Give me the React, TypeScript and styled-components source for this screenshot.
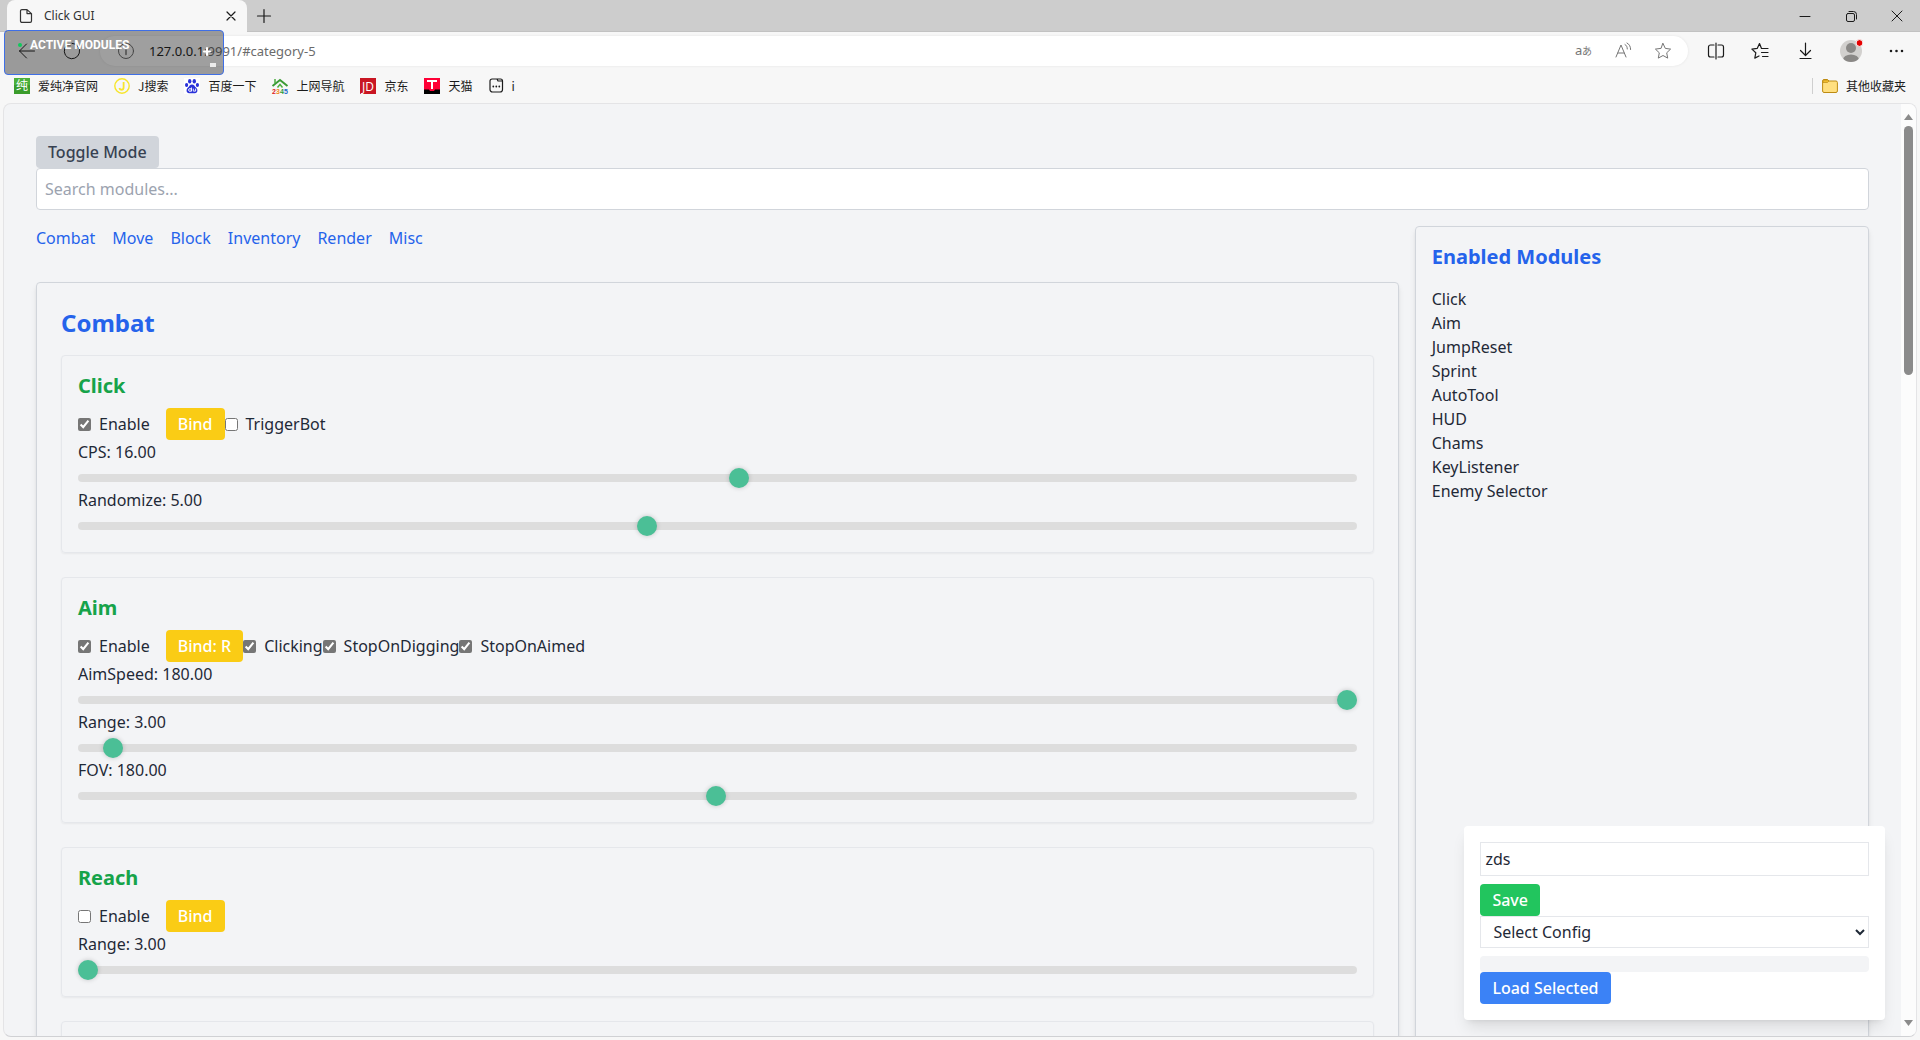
import React, { useState } from "react";
import styled, { createGlobalStyle } from "styled-components";

const uiFont = '"Noto Sans", "Noto Sans CJK SC", sans-serif';

const GlobalStyle = createGlobalStyle`
  *, *::before, *::after { box-sizing: border-box; }
  body { margin: 0; background: #f7f7f7; color: #1f2937; font: 16px/24px ${uiFont}; }
  h1, h2, h3, p, ul { margin: 0; padding: 0; }
  ul { list-style: none; }
  button, input, select { margin: 0; font: inherit; color: inherit; }
  a { color: inherit; text-decoration: none; }
  svg { display: block; flex: none; overflow: visible; }
`;

/* ---------- browser window ---------- */

const Window = styled.div`
  position: relative;
  display: flex;
  flex-direction: column;
  height: 100vh;
  overflow: hidden;
`;

const TabStrip = styled.div`
  display: flex;
  flex: none;
  height: 32px;
  padding-left: 7px;
  background: #cdcdcd;
  box-shadow: inset 0 -1px #c2c2c2;
`;

const Tab = styled.div`
  display: flex;
  align-items: center;
  gap: 11px;
  width: 240px;
  padding: 0 8px 0 12px;
  border-radius: 8px 8px 0 0;
  background: #f7f7f7;
  color: #333;
  font-size: 12px;
  line-height: 16px;
`;

const TabTitle = styled.span`
  flex: 1;
`;

const PlainButton = styled.button<{ $w: number }>`
  display: flex;
  flex: none;
  align-items: center;
  justify-content: center;
  width: ${(p) => p.$w}px;
  height: 100%;
  padding: 0;
  border: 0;
  background: none;
  color: #1b1b1b;
`;

const WindowControls = styled.div`
  display: flex;
  margin-left: auto;
`;

const Toolbar = styled.div`
  display: flex;
  flex: none;
  align-items: center;
  height: 38px;
  padding: 0 2px 0 4px;
`;

const AddressBar = styled.div`
  display: flex;
  flex: 1;
  align-items: center;
  height: 30px;
  margin: 0 5px 0 6px;
  padding: 0 5px 0 16px;
  border-radius: 15px;
  background: #fff;
  box-shadow: 0 0 3px rgba(0, 0, 0, 0.08);
  color: #6b6b6b;
  button { color: #767676; }
`;

const Url = styled.span`
  flex: 1;
  padding-left: 13px;
  font-size: 13px;
  line-height: 20px;
  b { color: #1b1b1b; font-weight: 400; }
`;

const Bookmarks = styled.nav`
  display: flex;
  flex: none;
  align-items: center;
  gap: 16px;
  height: 33px;
  padding: 0 14px 2px;
  color: #1b1b1b;
  font: 12px/16px "Noto Sans CJK SC", sans-serif;
`;

const Bookmark = styled.a<{ $last?: boolean }>`
  display: flex;
  align-items: center;
  gap: 8px;
  ${(p) => p.$last && "margin-left: auto; padding-left: 9px; border-left: 1px solid #cfcfcf;"}
`;

/* ---------- module list overlay ---------- */

const Overlay = styled.aside`
  position: absolute;
  top: 30px;
  left: 4px;
  display: flex;
  gap: 8px;
  width: 220px;
  height: 45px;
  padding: 6px 6px 7px 13px;
  border: 1px solid #3f6fe6;
  border-radius: 4px;
  background: rgba(15, 15, 15, 0.4);
  color: #fff;
  font: 700 12px/16px Roboto, "Liberation Sans", sans-serif;
`;

const StatusDot = styled.span`
  width: 4px;
  height: 4px;
  margin-top: 6px;
  border-radius: 50%;
  background: #0fc95b;
`;

const OverlayTitle = styled.span`
  flex: 1;
`;

const OverlayMarks = styled.span`
  display: flex;
  flex-direction: column;
  align-items: flex-end;
  justify-content: space-between;
  padding: 9px 1px 0 0;
`;

const MiniBar = styled.span`
  width: 6px;
  height: 4px;
  background: #ececec;
`;

/* ---------- page ---------- */

const Frame = styled.div`
  position: relative;
  display: flex;
  flex: 1;
  min-height: 0;
  margin: 0 3px 3px;
  overflow: hidden;
  border: 1px solid #e4e4e6;
  border-bottom-color: #d0d1d4;
  border-radius: 8px;
  background: #f3f4f6;
`;

const Page = styled.main`
  display: flex;
  flex: 1;
  flex-direction: column;
  align-items: stretch;
  min-width: 0;
  padding: 32px 32px 0;
  overflow: hidden;
`;

const Scrollbar = styled.div`
  display: flex;
  flex: none;
  flex-direction: column;
  align-items: center;
  width: 15px;
  padding: 10px 0;
  background: #fcfcfc;
  color: #8b8b8b;
`;

const ScrollTrack = styled.div`
  flex: 1;
  width: 9px;
  padding: 6px 0;
`;

const ScrollThumb = styled.div`
  height: 28%;
  border-radius: 5px;
  background: #8b8b8b;
`;

const tones = {
  gray: ["#d1d5db", "#374151"],
  yellow: ["#facc15", "#fff"],
  green: ["#22c55e", "#fff"],
  blue: ["#3b82f6", "#fff"],
};

const Button = styled.button<{ $tone: keyof typeof tones }>`
  align-self: flex-start;
  padding: 4px 12px;
  border: 0;
  border-radius: 4px;
  background: ${(p) => tones[p.$tone][0]};
  color: ${(p) => tones[p.$tone][1]};
  font-weight: 500;
`;

const Search = styled.input`
  width: 100%;
  padding: 8px;
  border: 1px solid #d1d5db;
  border-radius: 4px;
  background: #fff;
  &::placeholder { color: #9ca3af; opacity: 1; }
`;

const Columns = styled.div`
  display: grid;
  flex: 1;
  grid-template-columns: minmax(0, 3fr) minmax(0, 1fr);
  gap: 16px;
  margin-top: 16px;
`;

const CategoryNav = styled.nav`
  display: flex;
  gap: 17px;
  margin-bottom: 32px;
  color: #2563eb;
`;

const Panel = styled.section<{ $pad: number }>`
  padding: ${(p) => p.$pad}px;
  border: 1px solid #d1d5db;
  border-radius: 4px;
  box-shadow: 0 4px 6px -1px rgba(0, 0, 0, 0.1), 0 2px 4px -2px rgba(0, 0, 0, 0.1);
`;

const CategoryTitle = styled.h1`
  margin-bottom: 16px;
  color: #2563eb;
  font-size: 24px;
  font-weight: 700;
  line-height: 32px;
`;

const SideTitle = styled.h2`
  margin-bottom: 16px;
  color: #2563eb;
  font-size: 20px;
  font-weight: 700;
  line-height: 28px;
`;

const Card = styled.article`
  min-height: 120px;
  margin-bottom: 24px;
  padding: 16px;
  border: 1px solid #e5e7eb;
  border-radius: 4px;
  box-shadow: 0 1px 2px rgba(0, 0, 0, 0.05);
`;

const CardTitle = styled.h2`
  margin-bottom: 8px;
  color: #16a34a;
  font-size: 20px;
  font-weight: 700;
  line-height: 28px;
`;

const Row = styled.div`
  display: flex;
  align-items: center;
`;

const Check = styled.label<{ $gap?: boolean }>`
  display: flex;
  align-items: center;
  gap: 8px;
  margin-right: ${(p) => (p.$gap ? 16 : 0)}px;
  input { width: 13px; height: 13px; accent-color: #767676; }
`;

const SliderField = styled.label`
  display: block;
`;

const Range = styled.input`
  display: block;
  width: 100%;
  height: 8px;
  margin: 10px 0 6px;
  border-radius: 5px;
  background: #ddd;
  appearance: none;
  &::-webkit-slider-thumb {
    width: 20px;
    height: 20px;
    border-radius: 50%;
    background: #4bbf96;
    box-shadow: 0 0 5px rgba(0, 0, 0, 0.2);
    appearance: none;
  }
`;

const ConfigBox = styled.form`
  position: absolute;
  right: 31px;
  bottom: 16px;
  display: flex;
  flex-direction: column;
  width: 22%;
  padding: 16px;
  border-radius: 4px;
  background: #fff;
  box-shadow: 0 10px 15px -3px rgba(0, 0, 0, 0.1), 0 4px 6px -4px rgba(0, 0, 0, 0.1);
`;

const ConfigName = styled.input`
  margin-bottom: 8px;
  padding: 4px;
  border: 1px solid #e5e7eb;
  background: #fff;
`;

const ConfigSelect = styled.select`
  height: 32px;
  margin-bottom: 8px;
  padding: 0 4px 0 8px;
  border: 1px solid #e5e7eb;
  border-radius: 0;
  background: #fff;
`;

const ConfigInfo = styled.div`
  height: 16px;
  border-radius: 4px;
  background: #f3f4f6;
`;

/* ---------- icons ---------- */

const Icon = ({ d, s = 20, w = 1, children }: { d?: string; s?: number; w?: number; children?: React.ReactNode }) => (
  <svg width={s} height={s} viewBox={`0 0 ${s} ${s}`} fill="none" stroke="currentColor" strokeWidth={w} strokeLinecap="round" strokeLinejoin="round" aria-hidden="true">
    {d && <path d={d} />}
    {children}
  </svg>
);

const star = "M10 2.5l2.3 4.9 5.3.7-3.9 3.7 1 5.3-4.7-2.6-4.7 2.6 1-5.3-3.9-3.7 5.3-.7z";

const LogoChun = () => (
  <svg width="16" height="16" aria-hidden="true">
    <rect width="16" height="16" fill="#3a9c2b" />
    <rect width="16" height="7" fill="#4bb03a" />
    <text x="8" y="12" textAnchor="middle" fontSize="12" fontFamily="Noto Sans CJK SC, sans-serif" fill="#fff">纯</text>
  </svg>
);

const LogoJ = () => (
  <svg width="16" height="16" fill="none" stroke="#f7e52b" aria-hidden="true">
    <circle cx="8" cy="8" r="7.2" strokeWidth="1.4" />
    <path d="M9.6 4v5.4c0 3-3.8 3-4.2.6" strokeWidth="1.8" />
  </svg>
);

const LogoPaw = () => (
  <svg width="16" height="16" aria-hidden="true">
    <rect width="16" height="16" fill="#fff" />
    <g fill="#2a32d9">
      <ellipse cx="5.7" cy="3.3" rx="1.7" ry="2.3" />
      <ellipse cx="10.3" cy="3.3" rx="1.7" ry="2.3" />
      <ellipse cx="2.6" cy="7" rx="1.6" ry="2" />
      <ellipse cx="13.4" cy="7" rx="1.6" ry="2" />
      <path d="M8 6.6c2 0 2.7 1.9 4.2 3.2 2 1.8 1.4 5.4-1.2 5.4H5c-2.6 0-3.2-3.6-1.2-5.4C5.3 8.5 6 6.6 8 6.6z" />
    </g>
    <g fill="none" stroke="#fff" strokeWidth="0.9">
      <circle cx="6" cy="12" r="1.4" />
      <path d="M7.500 9.500v4M9.300 10.600v2.500h2.300v-2.500" />
    </g>
  </svg>
);

const Logo2345 = () => (
  <svg width="16" height="16" aria-hidden="true">
    <path d="M.5 8L8 2l7.500 6" fill="none" stroke="#3c9b35" strokeWidth="2" />
    <path d="M3 1v4M5.500 9.500L8 6.500l2.500 3" fill="none" stroke="#4caf3f" strokeWidth="1.500" />
    <g fontSize="7" fontWeight="700" fontFamily="Liberation Sans, sans-serif">
      <text x="0" y="15.500" fill="#e02020">2</text>
      <text x="4" y="15.500" fill="#f08c1a">3</text>
      <text x="8" y="15.500" fill="#2a9b3a">4</text>
      <text x="12" y="15.500" fill="#2468c8">5</text>
    </g>
  </svg>
);

const LogoJD = () => (
  <svg width="16" height="16" aria-hidden="true">
    <rect width="16" height="16" fill="#c91623" />
    <text x="8" y="13" textAnchor="middle" fontSize="12" fontFamily="Open Sans, sans-serif" fill="#fff">JD</text>
  </svg>
);

const LogoT = () => (
  <svg width="16" height="16" aria-hidden="true">
    <rect width="16" height="16" fill="#ff0036" />
    <path d="M0 11.500h5l1 1.500h4l1-1.500h5V16H0z" fill="#000" />
    <path d="M3 3h10M8 3v8" stroke="#fff" strokeWidth="2" />
  </svg>
);

const LogoSite = () => (
  <Icon s={15} w={1.2} d="M3 1h5l1 2h4.500v8.500a2.500 2.500 0 0 1-2.500 2.500h-7.500A2.500 2.500 0 0 1 1 11.500V3a2 2 0 0 1 2-2zM8 1h3.500a2 2 0 0 1 2 2">
    <path d="M4.300 8.500h0M7.300 8.500h0M10.300 8.500h0" strokeWidth="1.800" />
  </Icon>
);

const Folder = () => (
  <svg width="16" height="16" aria-hidden="true">
    <path d="M.6 3A1.500 1.500 0 0 1 2 1.500h3.500L7 3h7a1.500 1.500 0 0 1 1.400 1.500v8.500a1.500 1.500 0 0 1-1.400 1.500H2A1.500 1.500 0 0 1 .6 13z" fill="#ffdf80" stroke="#bd8b12" />
    <path d="M1 4.500h4.500L7 3 5.500 2H2a1 1 0 0 0-1 1z" fill="#f0bc2e" stroke="#bd8b12" strokeWidth=".7" />
  </svg>
);

/* ---------- data ---------- */

type Slider = { name: string; value: number; min: number; max: number };
type Module = { title: string; on: boolean; bind: string; checks: [string, boolean][]; sliders: Slider[] };

const modules: Module[] = [
  {
    title: "Click", on: true, bind: "Bind", checks: [["TriggerBot", false]],
    sliders: [{ name: "CPS", value: 16, min: 1, max: 30 }, { name: "Randomize", value: 5, min: 1, max: 10 }],
  },
  {
    title: "Aim", on: true, bind: "Bind: R", checks: [["Clicking", true], ["StopOnDigging", true], ["StopOnAimed", true]],
    sliders: [
      { name: "AimSpeed", value: 180, min: 1, max: 180 },
      { name: "Range", value: 3, min: 1, max: 100 },
      { name: "FOV", value: 180, min: 1, max: 360 },
    ],
  },
  { title: "Reach", on: false, bind: "Bind", checks: [], sliders: [{ name: "Range", value: 3, min: 3, max: 6 }] },
];

const categories = ["Combat", "Move", "Block", "Inventory", "Render", "Misc"];
const enabled = ["Click", "Aim", "JumpReset", "Sprint", "AutoTool", "HUD", "Chams", "KeyListener", "Enemy Selector"];
const bookmarks: [string, React.ReactNode][] = [
  ["爱纯净官网", <LogoChun />],
  ["J搜索", <LogoJ />],
  ["百度一下", <LogoPaw />],
  ["上网导航", <Logo2345 />],
  ["京东", <LogoJD />],
  ["天猫", <LogoT />],
  ["i", <LogoSite />],
];

function SliderRow({ name, value: initial, min, max }: Slider) {
  const [value, setValue] = useState(initial);
  return (
    <SliderField>
      {name}: {value.toFixed(2)}
      <Range type="range" min={min} max={max} step="any" value={value} onChange={(e) => setValue(Number(e.target.value))} />
    </SliderField>
  );
}

function ModuleCard({ title, on, bind, checks, sliders }: Module) {
  return (
    <Card>
      <CardTitle>{title}</CardTitle>
      <Row>
        <Check $gap><input type="checkbox" defaultChecked={on} />Enable</Check>
        <Button type="button" $tone="yellow">{bind}</Button>
        {checks.map(([label, checked]) => (
          <Check key={label}><input type="checkbox" defaultChecked={checked} />{label}</Check>
        ))}
      </Row>
      {sliders.map((s) => <SliderRow key={s.name} {...s} />)}
    </Card>
  );
}

export default function App() {
  return (
    <Window>
      <GlobalStyle />
      <TabStrip>
        <Tab>
          <Icon s={14} w={1.2} d="M2.900.6H8l4.500 4V12a1.400 1.400 0 0 1-1.400 1.400H2.900A1.400 1.400 0 0 1 1.500 12V2A1.400 1.400 0 0 1 2.900.6M8 .6v4h4.500" />
          <TabTitle>Click GUI</TabTitle>
          <PlainButton $w={16} aria-label="Close tab"><Icon s={8} w={1.2} d="M0 0l8 8M8 0L0 8" /></PlainButton>
        </Tab>
        <PlainButton $w={34} aria-label="New tab"><Icon s={14} w={1.2} d="M7 .5v13M.5 7h13" /></PlainButton>
        <WindowControls>
          <PlainButton $w={46} aria-label="Minimize"><Icon s={10} d="M0 5.500h10" /></PlainButton>
          <PlainButton $w={46} aria-label="Restore">
            <Icon s={11} d="M3 .5h4.500a3 3 0 0 1 3 3V8"><rect x=".5" y="2.500" width="8" height="8" rx="1.500" /></Icon>
          </PlainButton>
          <PlainButton $w={46} aria-label="Close"><Icon s={10} d="M0 0l10 10M10 0L0 10" /></PlainButton>
        </WindowControls>
      </TabStrip>

      <Toolbar>
        <PlainButton $w={45} aria-label="Back"><Icon d="M17.500 10H2.500M9.500 3L2.500 10l7 7" /></PlainButton>
        <PlainButton $w={45} aria-label="Refresh"><Icon d="M4.500 4.500A7.700 7.700 0 1 0 10 2.300M4.500 1v3.700h3.700" /></PlainButton>
        <AddressBar>
          <Icon><circle cx="10" cy="10" r="7.5" /><path d="M10 9v4.500M10 6.500h0" strokeWidth="1.4" /></Icon>
          <Url><b>127.0.0.1</b>:9991/#category-5</Url>
          <PlainButton $w={40} aria-label="Translate">
            <svg width="20" height="20" fill="currentColor" aria-hidden="true">
              <text x="2" y="14" fontSize="13" fontFamily="Noto Sans, sans-serif">a</text>
              <text x="9" y="14" fontSize="10" fontFamily="Noto Sans CJK JP, sans-serif">あ</text>
            </svg>
          </PlainButton>
          <PlainButton $w={40} aria-label="Read aloud"><Icon d="M3 16L8 4l5 12M5 12h6M12 3.500c1.500.8 2.300 2.500 2.300 4.500M14 2c2.500 1.300 3.600 3.700 3.600 6.500" /></PlainButton>
          <PlainButton $w={40} aria-label="Add to favorites"><Icon d={star} /></PlainButton>
        </AddressBar>
        <PlainButton $w={45} aria-label="Split screen">
          <Icon w={1.2} d="M8 4H4.500A2 2 0 0 0 2.500 6v8a2 2 0 0 0 2 2H8M12 4h3.500a2 2 0 0 1 2 2v8a2 2 0 0 1-2 2H12M10 2v16" />
        </PlainButton>
        <PlainButton $w={45} aria-label="Favorites">
          <Icon w={1.2} d="M11.500 7.500h-1L8.500 2.500 6.200 7.400l-5.300.7 3.900 3.700-1 5.300L8 15M11.500 7.500H17M10.500 11.500H17M11.500 15.500H17" />
        </PlainButton>
        <PlainButton $w={45} aria-label="Downloads"><Icon w={1.2} d="M9.500 2v12M4.500 9.500l5 5 5-5M4 17.500h11" /></PlainButton>
        <PlainButton $w={45} aria-label="Profile">
          <svg width="24" height="24" aria-hidden="true">
            <clipPath id="avatar"><circle cx="12" cy="12" r="11" /></clipPath>
            <g clipPath="url(#avatar)">
              <rect width="24" height="24" fill="#d2d0ce" />
              <circle cx="12" cy="9" r="5" fill="#8a8886" />
              <ellipse cx="12" cy="21" rx="8" ry="5.5" fill="#8a8886" />
            </g>
            <circle cx="20.5" cy="4" r="3.4" fill="#e60000" stroke="#f7f7f7" />
          </svg>
        </PlainButton>
        <PlainButton $w={45} aria-label="Settings and more"><Icon w={2.6} d="M5 10h0M10.500 10h0M16 10h0" /></PlainButton>
      </Toolbar>

      <Bookmarks>
        {bookmarks.map(([name, logo]) => <Bookmark key={name} href="#">{logo}{name}</Bookmark>)}
        <Bookmark href="#" $last><Folder />其他收藏夹</Bookmark>
      </Bookmarks>

      <Overlay>
        <StatusDot />
        <OverlayTitle>ACTIVE MODULES</OverlayTitle>
        <OverlayMarks>
          <Icon s={12} w={2} d="M3 2v7M0 5.500h6" />
          <MiniBar />
        </OverlayMarks>
      </Overlay>

      <Frame>
        <Page>
          <Button type="button" $tone="gray">Toggle Mode</Button>
          <Search type="text" placeholder="Search modules..." aria-label="Search modules" />
          <Columns>
            <div>
              <CategoryNav>
                {categories.map((c, i) => <a key={c} href={`#category-${i}`}>{c}</a>)}
              </CategoryNav>
              <Panel $pad={24}>
                <CategoryTitle>Combat</CategoryTitle>
                {modules.map((m) => <ModuleCard key={m.title} {...m} />)}
                <Card />
              </Panel>
            </div>
            <Panel $pad={16}>
              <SideTitle>Enabled Modules</SideTitle>
              <ul>{enabled.map((m) => <li key={m}>{m}</li>)}</ul>
            </Panel>
          </Columns>
        </Page>
        <Scrollbar aria-hidden="true">
          <svg width="9" height="6"><path d="M0 6L4.500 0 9 6z" fill="currentColor" /></svg>
          <ScrollTrack><ScrollThumb /></ScrollTrack>
          <svg width="9" height="6"><path d="M0 0l4.500 6L9 0z" fill="currentColor" /></svg>
        </Scrollbar>
        <ConfigBox>
          <ConfigName type="text" defaultValue="zds" aria-label="Config name" />
          <Button type="button" $tone="green">Save</Button>
          <ConfigSelect aria-label="Config"><option>Select Config</option></ConfigSelect>
          <ConfigInfo />
          <Button type="button" $tone="blue">Load Selected</Button>
        </ConfigBox>
      </Frame>
    </Window>
  );
}
